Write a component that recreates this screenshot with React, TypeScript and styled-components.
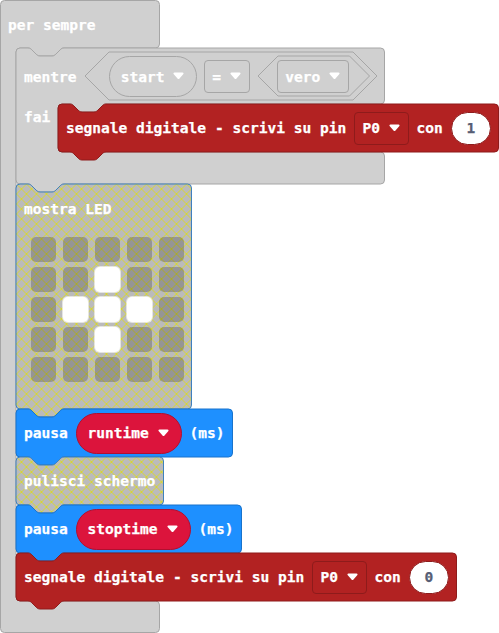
import React from "react";
import styled, { createGlobalStyle } from "styled-components";

const GlobalStyle = createGlobalStyle`
  body {
    margin: 0;
    background: #fff;
    overflow: hidden;
  }
`;

type Tone = { fill: string; stroke: string };

const tones: Record<string, Tone> = {
  grey: { fill: "#d0d0d0", stroke: "#a6a6a6" },
  red: { fill: "#b22222", stroke: "#8e1b1b" },
  blue: { fill: "#1e90ff", stroke: "#1873cc" },
  crimson: { fill: "#dc143c", stroke: "#b01030" },
  hatch: { fill: "url(#hatch)", stroke: "#3f81bd" },
};

const Workspace = styled.main`
  width: 499px;
  height: 633px;
  font: bold 14.55px/20px "DejaVu Sans Mono", monospace;
  color: #fff;
  -webkit-text-stroke: 0.25px currentColor;
`;

const Shape = styled.div<{ $w: number; $h: number }>`
  position: relative;
  isolation: isolate;
  width: ${(p) => p.$w}px;
  height: ${(p) => p.$h}px;
`;

const Outline = styled.svg`
  position: absolute;
  inset: 0;
  width: 100%;
  height: 100%;
  overflow: visible;
  z-index: -1;
`;

const Row = styled.div<{ $h: number; $drop?: number }>`
  display: flex;
  align-items: center;
  gap: 8px;
  height: ${(p) => p.$h}px;
  padding: ${(p) => p.$drop ?? 0}px 0 0 8px;
  box-sizing: border-box;
`;

const Stack = styled.div<{ $indent: number }>`
  display: flex;
  flex-direction: column;
  padding-left: ${(p) => p.$indent}px;
`;

const Label = styled.span<{ $w?: number; $drop?: number }>`
  white-space: pre;
  flex: none;
  width: ${(p) => (p.$w ? `${p.$w}px` : "auto")};
  padding-top: ${(p) => p.$drop ?? 0}px;
`;

const Pill = styled.span<{ $tone: string; $w: number }>`
  display: flex;
  align-items: center;
  justify-content: space-between;
  box-sizing: border-box;
  flex: none;
  width: ${(p) => p.$w}px;
  height: 41px;
  padding: 0 12px 0 11px;
  border-radius: 21px;
  border: 1px solid ${(p) => tones[p.$tone].stroke};
  background: ${(p) => tones[p.$tone].fill};
`;

const Field = styled.span<{ $tone: string; $w: number }>`
  display: flex;
  align-items: center;
  justify-content: space-between;
  box-sizing: border-box;
  flex: none;
  width: ${(p) => p.$w}px;
  height: 33px;
  padding: 0 8px 0 7px;
  border-radius: 4px;
  border: 1px solid ${(p) => tones[p.$tone].stroke};
`;

const NumberInput = styled.span`
  display: flex;
  align-items: center;
  justify-content: center;
  box-sizing: border-box;
  flex: none;
  width: 40px;
  height: 33px;
  border-radius: 17px;
  border: 1px solid #8e1b1b;
  background: #fff;
  color: #575e75;
`;

const WhileBody = styled.div`
  display: flex;
  align-items: flex-start;
  height: 48px;
`;

const WhileLabel = styled.div`
  width: 42px;
  flex: none;
  padding: 3px 0 0 8px;
  box-sizing: border-box;
`;

const Condition = styled.div`
  position: relative;
  isolation: isolate;
  display: flex;
  align-items: center;
  gap: 7.5px;
  width: 292px;
  height: 48px;
  padding-left: 24px;
  box-sizing: border-box;
`;

const TrueValue = styled.div`
  position: relative;
  isolation: isolate;
  display: flex;
  align-items: center;
  justify-content: center;
  width: 111px;
  height: 40px;
`;

const LedTitle = styled.div`
  height: 53px;
  padding: 15px 0 0 8px;
  box-sizing: border-box;
`;

const LedGrid = styled.div`
  display: grid;
  grid-template-columns: repeat(5, 25px);
  grid-auto-rows: 25px;
  gap: 5px 7px;
  padding-left: 15px;
`;

const Led = styled.i<{ $on: boolean }>`
  border-radius: 5px;
  background: ${(p) => (p.$on ? "#fff" : "rgba(0,0,0,.2)")};
  box-shadow: ${(p) => (p.$on ? "0 0 0 1px rgba(255,255,255,.6)" : "none")};
`;

const ArrowIcon = styled.svg`
  width: 11px;
  height: 8px;
  flex: none;
`;

const Arrow = () => (
  <ArrowIcon viewBox="0 0 11 8">
    <path d="M1.5.5h8c1 0 1.4 1 .7 1.7L6.5 6.6a1.4 1.4 0 0 1-2 0L.8 2.2C.1 1.5.5.5 1.5.5Z" fill="#fff" />
  </ArrowIcon>
);

const NOTCH = "c2 0 3 1 4 2l4 4c1 1 2 2 4 2h12c2 0 3-1 4-2l4-4c1-1 2-2 4-2";
const TAB = "c-2 0-3 1-4 2l-4 4c-1 1-2 2-4 2h-12c-2 0-3-1-4-2l-4-4c-1-1-2-2-4-2";

const statementPath = (w: number, h: number) =>
  `M0 4a4 4 0 0 1 4-4h8${NOTCH}H${w - 4}a4 4 0 0 1 4 4V${h - 4}a4 4 0 0 1-4 4H48${TAB}H4a4 4 0 0 1-4-4Z`;

const wrapPath = (w: number, h: number, top: number, arm: number, left: number, notched: boolean) =>
  `M0 4a4 4 0 0 1 4-4${notched ? "h8" + NOTCH : ""}H${w - 4}a4 4 0 0 1 4 4V${top - 4}a4 4 0 0 1-4 4H${
    left + 48
  }${TAB}H${left + 4}a4 4 0 0 0-4 4V${h - arm - 4}a4 4 0 0 0 4 4H${w - 4}a4 4 0 0 1 4 4V${
    h - 4
  }a4 4 0 0 1-4 4${notched ? "H48" + TAB : ""}H4a4 4 0 0 1-4-4Z`;

const Contour = ({ d, tone }: { d: string; tone: string }) => (
  <Outline>
    <path d={d} fill={tones[tone].fill} stroke={tones[tone].stroke} />
  </Outline>
);

type StatementProps = { tone: string; w: number; h?: number; children: React.ReactNode };

const Statement = ({ tone, w, h = 48, children }: StatementProps) => (
  <Shape $w={w} $h={h}>
    <Contour d={statementPath(w, h)} tone={tone} />
    {children}
  </Shape>
);

const DigitalWrite = ({ value, w }: { value: string; w: number }) => (
  <Statement tone="red" w={w}>
    <Row $h={48}>
      <Label $w={280.4}>segnale digitale - scrivi su pin</Label>
      <Field $tone="red" $w={54.2}>
        P0
        <Arrow />
      </Field>
      <Label>con</Label>
      <NumberInput>{value}</NumberInput>
    </Row>
  </Statement>
);

const Pause = ({ name, w, pill }: { name: string; w: number; pill: number }) => (
  <Statement tone="blue" w={w}>
    <Row $h={48}>
      <Label $w={43.5}>pausa</Label>
      <Pill $tone="crimson" $w={pill}>
        {name}
        <Arrow />
      </Pill>
      <Label>(ms)</Label>
    </Row>
  </Statement>
);

const HatchDefs = styled.svg`
  position: absolute;
  width: 0;
  height: 0;
`;

const leds = [".....", "..#..", ".###.", "..#..", "....."].join("").split("");

export default function App() {
  return (
    <Workspace>
      <GlobalStyle />
      <HatchDefs>
        <defs>
          <pattern id="hatch" x="0.5" width="10" height="10" patternUnits="userSpaceOnUse">
            <rect width="10" height="10" fill="#bbb" />
            <path d="M-1-1 11 11M11-1-1 11" stroke="#d6d633" />
          </pattern>
        </defs>
      </HatchDefs>
      <Shape $w={160} $h={633}>
        <Outline viewBox="-0.5 -0.5 160 633">
          <path d={wrapPath(159, 632, 47.5, 31.5, 15.5, false)} fill="#d0d0d0" stroke="#a6a6a6" />
        </Outline>
        <Row $h={48} $drop={2}>
          <Label>per sempre</Label>
        </Row>
        <Stack $indent={16}>
          <Shape $w={368.5} $h={136}>
            <Contour d={wrapPath(368.5, 136, 56, 32, 42, true)} tone="grey" />
            <Row $h={56}>
              <Label $w={52.7} $drop={2}>mentre</Label>
              <Condition>
                <Outline>
                  <path d="M24 0H268L292 24 268 48H24L0 24Z" fill="#d0d0d0" stroke="#a6a6a6" />
                </Outline>
                <Pill $tone="grey" $w={88}>
                  <Label $drop={1}>start</Label>
                  <Arrow />
                </Pill>
                <Field $tone="grey" $w={46}>
                  <Label $drop={1}>=</Label>
                  <Arrow />
                </Field>
                <TrueValue>
                  <Outline>
                    <path d="M20 0H91.5L111.5 20 91.5 40H20L0 20Z" fill="#d0d0d0" stroke="#a6a6a6" />
                  </Outline>
                  <Field $tone="grey" $w={72}>
                    <Label $drop={1}>vero</Label>
                    <Arrow />
                  </Field>
                </TrueValue>
              </Condition>
            </Row>
            <WhileBody>
              <WhileLabel>fai</WhileLabel>
              <DigitalWrite value="1" w={440.5} />
            </WhileBody>
          </Shape>
          <Statement tone="hatch" w={175.5} h={225}>
            <LedTitle>mostra LED</LedTitle>
            <LedGrid>
              {leds.map((led, i) => (
                <Led key={i} $on={led === "#"} />
              ))}
            </LedGrid>
          </Statement>
          <Pause name="runtime" w={216.5} pill={106} />
          <Statement tone="hatch" w={147.5}>
            <Row $h={48}>
              <Label>pulisci schermo</Label>
            </Row>
          </Statement>
          <Pause name="stoptime" w={225.5} pill={115} />
          <DigitalWrite value="0" w={440.5} />
        </Stack>
      </Shape>
    </Workspace>
  );
}
